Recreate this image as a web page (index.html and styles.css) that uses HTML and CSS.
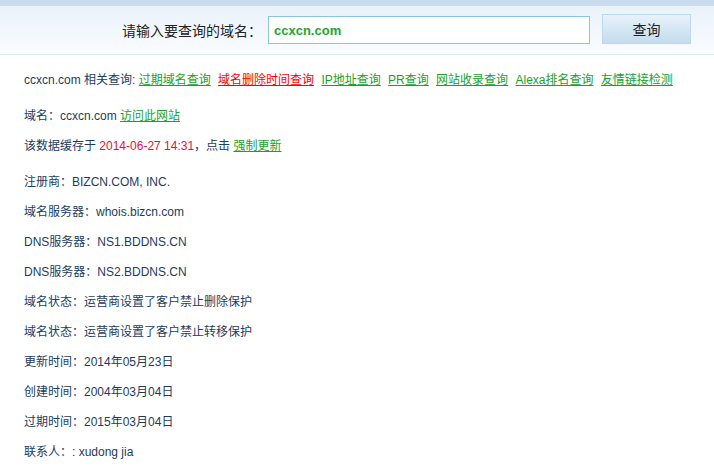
FILE: index.html
```html
<!DOCTYPE html>
<html lang="zh-CN">
<head>
  <meta charset="UTF-8">
  <title>域名查询</title>
  <link rel="stylesheet" href="styles.css">
</head>
<body>

  <div class="topline"></div>
  <div class="search">
    <label class="search-label" for="domain">请输入要查询的域名：</label>
    <input class="search-input" id="domain" type="text" value="ccxcn.com">
    <button class="search-btn">查询</button>
  </div>

  <div class="content">
    <div class="group">
      <div class="row">
        ccxcn.com 相关查询:
        <a href="#">过期域名查询</a>
        <a href="#" class="red">域名删除时间查询</a>
        <a href="#">IP地址查询</a>
        <a href="#">PR查询</a>
        <a href="#">网站收录查询</a>
        <a href="#">Alexa排名查询</a>
        <a href="#">友情链接检测</a>
      </div>
    </div>

    <div class="group">
      <div class="row">域名：ccxcn.com <a href="#">访问此网站</a></div>
      <div class="row">该数据缓存于 <span class="date">2014-06-27 14:31</span>，点击 <a href="#">强制更新</a></div>
    </div>

    <div class="group">
      <div class="row">注册商：BIZCN.COM, INC.</div>
      <div class="row">域名服务器：whois.bizcn.com</div>
      <div class="row">DNS服务器：NS1.BDDNS.CN</div>
      <div class="row">DNS服务器：NS2.BDDNS.CN</div>
      <div class="row">域名状态：运营商设置了客户禁止删除保护</div>
      <div class="row">域名状态：运营商设置了客户禁止转移保护</div>
      <div class="row">更新时间：2014年05月23日</div>
      <div class="row">创建时间：2004年03月04日</div>
      <div class="row">过期时间：2015年03月04日</div>
      <div class="row">联系人：: xudong jia</div>
    </div>
  </div>

</body>
</html>
```

FILE: styles.css
```css
body {
  margin: 0;
  font-family: "Liberation Sans", "Noto Sans CJK SC", sans-serif;
  font-size: 12px;
  color: #1d3b5e;
  background: #fff;
}

.topline {
  height: 6px;
  background: #c8dcee;
}

.search {
  height: 48px;
  display: flex;
  align-items: center;
  justify-content: flex-end;
  padding-right: 23px;
  background: linear-gradient(#e9f2fa, #fafcff);
  border-bottom: 1px solid #dbe7f1;
}
.search-label {
  font-size: 14px;
  color: #222;
  margin-right: 6px;
}
.search-input {
  box-sizing: border-box;
  width: 322px;
  height: 28px;
  margin: 0 12px 0 0;
  padding: 0 5px;
  border: 1px solid #8fc3e0;
  font-family: "Liberation Sans", sans-serif;
  font-size: 13px;
  font-weight: bold;
  color: #1da532;
  outline: none;
}
.search-btn {
  box-sizing: border-box;
  width: 89px;
  height: 30px;
  margin-bottom: 2px;
  border: 1px solid #bcd8ec;
  background: linear-gradient(#e8f2fa, #c4dcee);
  font-family: "Noto Sans CJK SC", sans-serif;
  font-size: 14px;
  color: #222;
}

.content {
  padding: 10px 24px 0;
}
.group {
  margin-bottom: 6px;
}
.row {
  line-height: 30px;
  white-space: nowrap;
}

a {
  color: #17a22d;
  text-decoration: underline;
  margin-right: 4px;
}
a.red {
  color: #f00;
}
.date {
  color: #e8103a;
}
```
